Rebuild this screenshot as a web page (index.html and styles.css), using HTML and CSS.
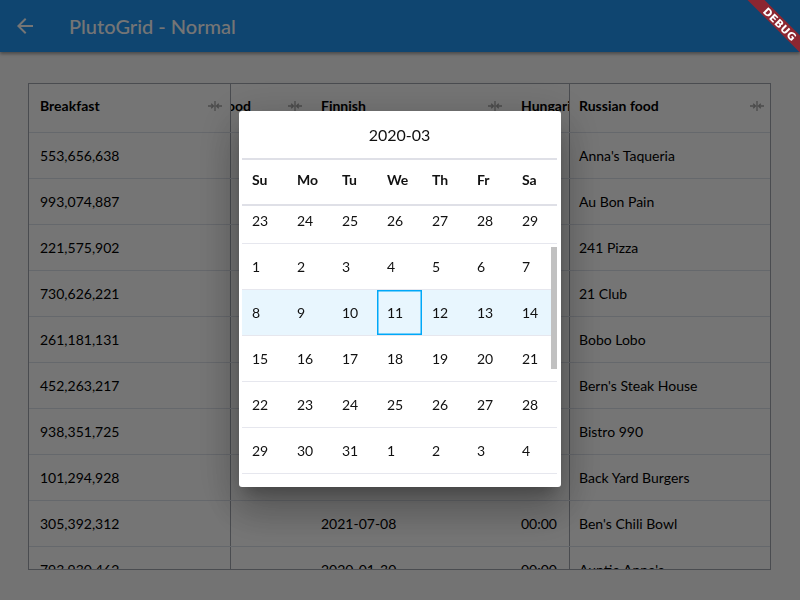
FILE: index.html
```html
<!DOCTYPE html>
<html>
<head>
<meta charset="utf-8">
<link rel="stylesheet" href="styles.css">
</head>
<body>
<header class="appbar">
  <svg class="back" viewBox="0 0 24 24"><path d="M20 11H7.83l5.59-5.59L12 4l-8 8 8 8 1.41-1.41L7.83 13H20v-2z" fill="currentColor"/></svg>
  <span class="title">PlutoGrid - Normal</span>
</header>
<main class="page">
  <div class="grid">
    <div class="row head">
      <div class="cell left"><span class="lbl">Breakfast</span><svg class="rz" viewBox="0 0 14 12"><path d="M0 6H5.5M3.2 3.7L5.5 6L3.2 8.3M7 1V11M14 6H8.5M10.8 3.7L8.5 6L10.8 8.3" fill="none" stroke="currentColor" stroke-width="1.3"/></svg></div>
      <div class="mid"><div class="track">
        <div class="cell ca"><span class="lbl">Chinese food</span><svg class="rz" viewBox="0 0 14 12"><path d="M0 6H5.5M3.2 3.7L5.5 6L3.2 8.3M7 1V11M14 6H8.5M10.8 3.7L8.5 6L10.8 8.3" fill="none" stroke="currentColor" stroke-width="1.3"/></svg></div>
        <div class="cell cf"><span class="lbl">Finnish</span><svg class="rz" viewBox="0 0 14 12"><path d="M0 6H5.5M3.2 3.7L5.5 6L3.2 8.3M7 1V11M14 6H8.5M10.8 3.7L8.5 6L10.8 8.3" fill="none" stroke="currentColor" stroke-width="1.3"/></svg></div>
        <div class="cell ch"><span class="lbl">Hungarian food</span><svg class="rz" viewBox="0 0 14 12"><path d="M0 6H5.5M3.2 3.7L5.5 6L3.2 8.3M7 1V11M14 6H8.5M10.8 3.7L8.5 6L10.8 8.3" fill="none" stroke="currentColor" stroke-width="1.3"/></svg></div>
      </div></div>
      <div class="cell right"><span class="lbl">Russian food</span><svg class="rz" viewBox="0 0 14 12"><path d="M0 6H5.5M3.2 3.7L5.5 6L3.2 8.3M7 1V11M14 6H8.5M10.8 3.7L8.5 6L10.8 8.3" fill="none" stroke="currentColor" stroke-width="1.3"/></svg></div>
    </div>
    <div class="row"><div class="cell left">553,656,638</div><div class="mid"><div class="track"><div class="cell ca"></div><div class="cell cf">2020-11-14</div><div class="cell ch">00:00</div></div></div><div class="cell right">Anna's Taqueria</div></div>
    <div class="row"><div class="cell left">993,074,887</div><div class="mid"><div class="track"><div class="cell ca"></div><div class="cell cf">2021-02-03</div><div class="cell ch">00:00</div></div></div><div class="cell right">Au Bon Pain</div></div>
    <div class="row"><div class="cell left">221,575,902</div><div class="mid"><div class="track"><div class="cell ca"></div><div class="cell cf">2020-06-21</div><div class="cell ch">00:00</div></div></div><div class="cell right">241 Pizza</div></div>
    <div class="row"><div class="cell left">730,626,221</div><div class="mid"><div class="track"><div class="cell ca"></div><div class="cell cf">2021-09-12</div><div class="cell ch">00:00</div></div></div><div class="cell right">21 Club</div></div>
    <div class="row"><div class="cell left">261,181,131</div><div class="mid"><div class="track"><div class="cell ca"></div><div class="cell cf">2020-04-05</div><div class="cell ch">00:00</div></div></div><div class="cell right">Bobo Lobo</div></div>
    <div class="row"><div class="cell left">452,263,217</div><div class="mid"><div class="track"><div class="cell ca"></div><div class="cell cf">2021-03-27</div><div class="cell ch">00:00</div></div></div><div class="cell right">Bern's Steak House</div></div>
    <div class="row"><div class="cell left">938,351,725</div><div class="mid"><div class="track"><div class="cell ca"></div><div class="cell cf">2020-08-16</div><div class="cell ch">00:00</div></div></div><div class="cell right">Bistro 990</div></div>
    <div class="row"><div class="cell left">101,294,928</div><div class="mid"><div class="track"><div class="cell ca"></div><div class="cell cf">2021-05-02</div><div class="cell ch">00:00</div></div></div><div class="cell right">Back Yard Burgers</div></div>
    <div class="row"><div class="cell left">305,392,312</div><div class="mid"><div class="track"><div class="cell ca"></div><div class="cell cf">2021-07-08</div><div class="cell ch">00:00</div></div></div><div class="cell right">Ben's Chili Bowl</div></div>
    <div class="row"><div class="cell left">793,930,462</div><div class="mid"><div class="track"><div class="cell ca"></div><div class="cell cf">2020-01-30</div><div class="cell ch">00:00</div></div></div><div class="cell right">Auntie Anne's</div></div>
  </div>
</main>

<div class="barrier">
  <div class="dialog">
    <div class="dtitle">2020-03</div>
    <div class="dhead">
      <div class="dcell">Su</div><div class="dcell">Mo</div><div class="dcell">Tu</div><div class="dcell">We</div><div class="dcell">Th</div><div class="dcell">Fr</div><div class="dcell">Sa</div>
    </div>
    <div class="dbody">
      <div class="dtrack">
        <div class="drow"><div class="dcell">23</div><div class="dcell">24</div><div class="dcell">25</div><div class="dcell">26</div><div class="dcell">27</div><div class="dcell">28</div><div class="dcell">29</div></div>
        <div class="drow"><div class="dcell">1</div><div class="dcell">2</div><div class="dcell">3</div><div class="dcell">4</div><div class="dcell">5</div><div class="dcell">6</div><div class="dcell">7</div></div>
        <div class="drow active"><div class="dcell">8</div><div class="dcell">9</div><div class="dcell">10</div><div class="dcell sel">11</div><div class="dcell">12</div><div class="dcell">13</div><div class="dcell">14</div></div>
        <div class="drow"><div class="dcell">15</div><div class="dcell">16</div><div class="dcell">17</div><div class="dcell">18</div><div class="dcell">19</div><div class="dcell">20</div><div class="dcell">21</div></div>
        <div class="drow"><div class="dcell">22</div><div class="dcell">23</div><div class="dcell">24</div><div class="dcell">25</div><div class="dcell">26</div><div class="dcell">27</div><div class="dcell">28</div></div>
        <div class="drow"><div class="dcell">29</div><div class="dcell">30</div><div class="dcell">31</div><div class="dcell">1</div><div class="dcell">2</div><div class="dcell">3</div><div class="dcell">4</div></div>
        <div class="drow"><div class="dcell">5</div><div class="dcell">6</div><div class="dcell">7</div><div class="dcell">8</div><div class="dcell">9</div><div class="dcell">10</div><div class="dcell">11</div></div>
      </div>
      <div class="sbar"></div>
    </div>
  </div>
</div>
<div class="banner">DEBUG</div>
</body>
</html>
```

FILE: styles.css
```css
html, body {
  margin: 0;
  height: 100%;
  overflow: hidden;
}
body {
  font-family: Lato, "Liberation Sans", sans-serif;
  background: #fafafa;
  color: #000;
}
.appbar {
  height: 52px;
  background: #2196f3;
  color: #fff;
  display: flex;
  align-items: center;
  box-shadow: 0 2px 3px rgba(0, 0, 0, 0.35);
  position: relative;
}
.back {
  width: 24px;
  height: 24px;
  margin-left: 13px;
  flex: none;
}
.title {
  margin-left: 32px;
  font-size: 20px;
  font-weight: 500;
}
.page {
  padding: 31px 29px 0 28px;
}
.grid {
  height: 487px;
  box-sizing: border-box;
  border: 1px solid #a1a5ae;
  background: #fff;
  overflow: hidden;
}
.row {
  display: flex;
  height: 46px;
  box-sizing: border-box;
  border-bottom: 1px solid #dde2eb;
}
.row.head {
  height: 49px;
}
.head .cell {
  font-weight: 700;
  padding-bottom: 5px;
}
.cell {
  display: flex;
  align-items: center;
  box-sizing: border-box;
  padding-left: 11px;
  font-size: 14px;
  white-space: nowrap;
  overflow: hidden;
  flex: none;
}
.lbl {
  flex: 1;
  overflow: hidden;
}
.rz {
  width: 14px;
  height: 12px;
  flex: none;
  margin-right: 8px;
  color: rgba(0, 0, 0, 0.36);
}
.left {
  width: 202px;
  border-right: 1px solid #a1a5ae;
}
.right {
  width: 201px;
  border-left: 1px solid #a1a5ae;
  padding-left: 9px;
}
.right .rz {
  margin-right: 6px;
}
.mid {
  flex: 1;
  overflow: hidden;
  display: flex;
}
.track {
  display: flex;
  flex: none;
  margin-left: -76px;
}
.ca { width: 155px; padding-left: 14px; }
.cf, .ch { width: 200px; }

/* modal */
.barrier {
  position: fixed;
  inset: 0;
  background: rgba(0, 0, 0, 0.54);
  display: flex;
  align-items: center;
  justify-content: center;
}
.dialog {
  width: 322px;
  height: 376px;
  box-sizing: border-box;
  padding: 0 4px 3px 3px;
  margin-top: -2px;
  background: #fff;
  border-radius: 3px;
  display: flex;
  flex-direction: column;
  box-shadow: 0 11px 15px -7px rgba(0,0,0,.25), 0 24px 38px 3px rgba(0,0,0,.18), 0 9px 46px 8px rgba(0,0,0,.15);
}
.dtitle {
  height: 47px;
  flex: none;
  display: flex;
  align-items: center;
  justify-content: center;
  font-size: 16px;
  color: #111;
}
.dhead {
  flex: none;
  display: flex;
  height: 48px;
  box-sizing: border-box;
  border-top: 2px solid #dfe0e7;
  border-bottom: 2px solid #dfe0e7;
  padding-bottom: 6px;
}
.dhead .dcell {
  font-weight: 700;
}
.dcell {
  width: 45px;
  flex: none;
  box-sizing: border-box;
  padding-left: 10px;
  display: flex;
  align-items: center;
  font-size: 14px;
  color: #111;
}
.dbody {
  height: 278px;
  overflow: hidden;
  position: relative;
}
.dtrack {
  margin-top: -8px;
}
.drow {
  display: flex;
  height: 46px;
  box-sizing: border-box;
  border-bottom: 1px solid #e6e7ee;
}
.drow.active {
  background: #e8f6fe;
}
.dcell.sel {
  box-shadow: inset 0 0 0 1.5px #00a8f8;
}
.sbar {
  position: absolute;
  right: 0;
  top: 41px;
  width: 6px;
  height: 122px;
  background: #c1c1c1;
}
.banner {
  position: fixed;
  left: 720px;
  top: 18px;
  width: 120px;
  height: 12px;
  background: rgba(183, 28, 28, 0.75);
  color: #fff;
  transform: rotate(45deg);
  text-align: center;
  font-family: "DejaVu Sans", sans-serif;
  font-weight: 700;
  font-size: 10.5px;
  line-height: 12px;
  letter-spacing: 0.2px;
}
```
